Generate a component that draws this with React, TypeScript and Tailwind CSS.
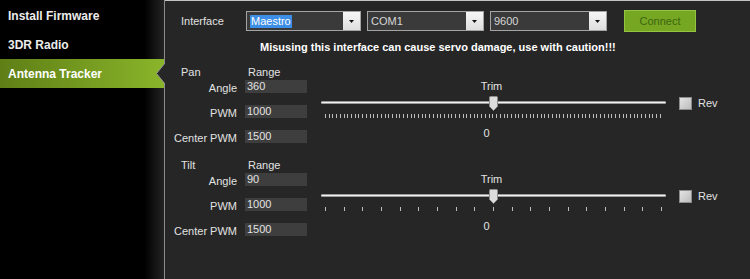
import React from 'react';

const font = { fontFamily: '"Liberation Sans", Arial, sans-serif' };

const menu = ['Install Firmware', '3DR Radio', 'Antenna Tracker'];

const Select = ({ value, width, highlight }: { value: string; width: string; highlight?: boolean }) => (
  <div className={`flex h-[20px] ${width} border border-[#a4a4a4] bg-[#3a3a3a]`}>
    <div className="flex flex-1 items-center pl-[3px] text-[11px] text-[#d6d6d6]">
      {highlight ? <span className="bg-[#3d8ee6] px-px leading-[13px] text-white">{value}</span> : value}
    </div>
    <div className="flex w-[17px] items-center justify-center bg-gradient-to-b from-[#f6f6f6] to-[#dedede]">
      <svg width="5" height="3" viewBox="0 0 5 3">
        <path d="M0 0h5L2.5 3z" fill="#111" />
      </svg>
    </div>
  </div>
);

const Field = ({ label, value }: { label: string; value: string }) => (
  <div className="flex h-[13px] items-center">
    <div className="flex w-[56px] justify-end whitespace-nowrap pt-[4px] text-[11px] text-[#e2e2e2]">{label}</div>
    <div className="ml-[8px] flex h-[13px] w-[62px] items-center bg-[#3e3e3e] pl-[2px] text-[11px] text-[#e2e2e2]">
      {value}
    </div>
  </div>
);

const Section = ({ name, angle, ticks }: { name: string; angle: string; ticks: number }) => (
  <div className="flex">
    <div className="flex w-[126px] flex-col">
      <div className="flex h-[13px] items-center text-[11px] text-[#e2e2e2]">
        <span className="w-[67px]">{name}</span>
        <span>Range</span>
      </div>
      <div className="mt-[1px] flex flex-col gap-[12px]">
        <Field label="Angle" value={angle} />
        <Field label="PWM" value="1000" />
        <Field label="Center PWM" value="1500" />
      </div>
    </div>
    <div className="ml-[14px] flex w-[345px] flex-col">
      <div className="mt-[12px] flex h-[13px] justify-center pr-[4px] text-[11px] text-[#e2e2e2]">Trim</div>
      <div className="relative mt-[5px] h-[14px]">
        <div className="absolute left-0 right-0 top-[5px] h-[3px] rounded-sm border-y border-[#9a9a9a] bg-[#f0f0f0]" />
        <svg className="absolute left-[168px] top-0" width="9" height="15" viewBox="0 0 9 15">
          <path d="M0.5 1.5a1 1 0 0 1 1-1h6a1 1 0 0 1 1 1v9l-4 4-4-4z" fill="#dcdcdc" stroke="#8c8c8c" />
        </svg>
      </div>
      <div className="mt-[4px] flex h-[4px] justify-between px-[4px]">
        {Array.from({ length: ticks }, (_, i) => (
          <div key={i} className="h-[4px] w-px bg-[#bdbdbd]" />
        ))}
      </div>
      <div className="mt-[7px] flex h-[13px] justify-center pr-[14px] text-[11px] text-[#e2e2e2]">0</div>
    </div>
    <div className="ml-[13px] mt-[31px] flex h-[13px] items-center">
      <div className="h-[13px] w-[13px] border border-[#8c8c8c] bg-gradient-to-br from-[#e4e4e4] to-[#bcbcbc]" />
      <span className="ml-[6px] text-[11px] text-[#e2e2e2]">Rev</span>
    </div>
  </div>
);

const App = () => {
  return (
    <div className="flex h-[279px] w-[750px] overflow-hidden bg-[#262626]" style={font}>
      <aside className="relative w-[165px] border-r border-[#8a8a8a] bg-[linear-gradient(to_right,#000_88%,#242424)] pt-[1px]">
        {menu.map((item) => {
          const active = item === 'Antenna Tracker';
          return (
            <div
              key={item}
              className={`relative flex h-[29px] items-center pl-[8px] text-[12px] font-bold ${
                active ? 'bg-gradient-to-r from-[#5f7f16] to-[#8ab52a] text-white' : 'text-[#ececec]'
              }`}
            >
              {item}
              {active && (
                <svg className="absolute right-[-1px] top-[4px]" width="9" height="21" viewBox="0 0 9 21">
                  <path d="M9 0L0.5 10.5L9 21z" fill="#262626" />
                  <path d="M9 0L0.5 10.5L9 21" fill="none" stroke="#9a9a9a" />
                </svg>
              )}
            </div>
          );
        })}
      </aside>

      <main className="flex flex-1 flex-col border-t border-[#c4c4c4] pl-[16px] pt-[9px]">
        <div className="flex h-[22px] items-center">
          <span className="w-[65px] text-[11px] text-[#e2e2e2]">Interface</span>
          <Select value="Maestro" width="w-[115px]" highlight />
          <div className="ml-[6px]">
            <Select value="COM1" width="w-[117px]" />
          </div>
          <div className="ml-[6px]">
            <Select value="9600" width="w-[117px]" />
          </div>
          <button className="ml-[17px] h-[22px] w-[72px] border border-[#95c440] bg-[#76a722] text-[11px] text-[#3d6511]">
            Connect
          </button>
        </div>

        <div className="mt-[9px] h-[13px] pl-[79px] text-[11px] font-bold leading-[13px] text-white">
          Misusing this interface can cause servo damage, use with caution!!!
        </div>

        <div className="mt-[12px]">
          <Section name="Pan" angle="360" ticks={91} />
        </div>
        <div className="mt-[16px]">
          <Section name="Tilt" angle="90" ticks={19} />
        </div>
      </main>
    </div>
  );
};

export default App;
